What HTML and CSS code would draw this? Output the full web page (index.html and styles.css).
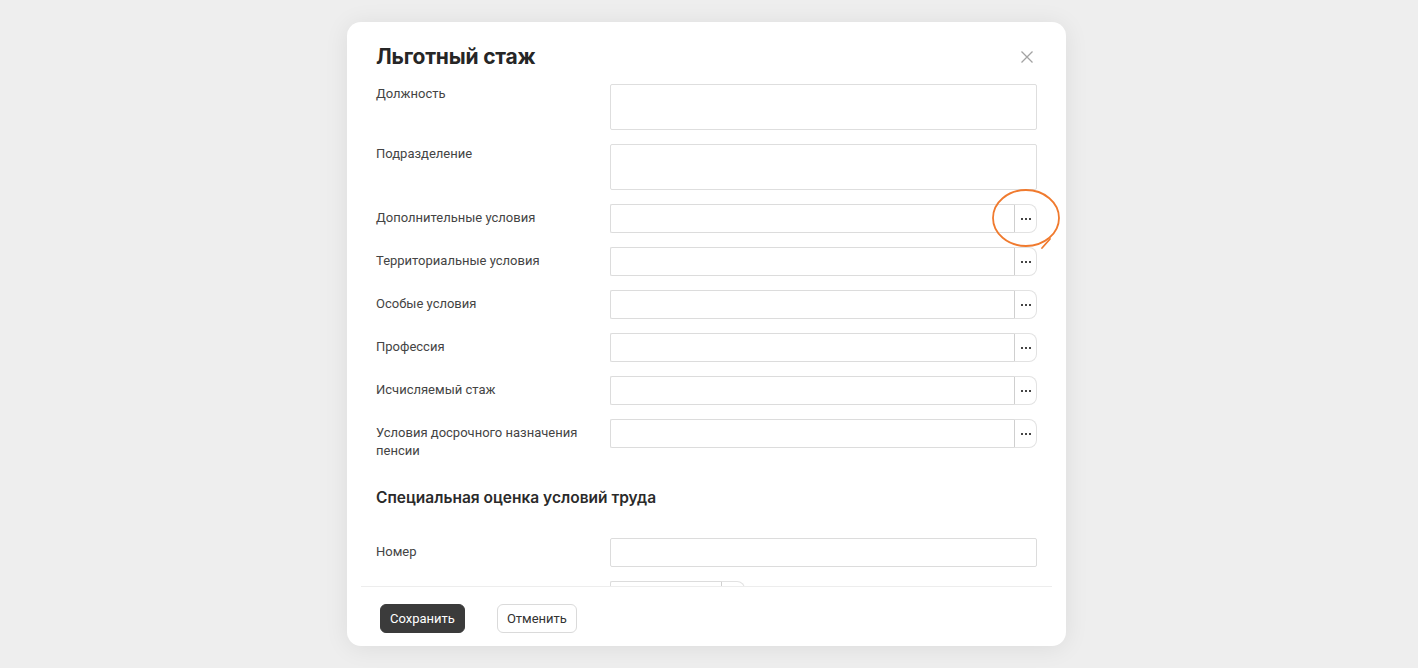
FILE: index.html
```html
<!DOCTYPE html>
<html lang="ru">
<head>
<meta charset="utf-8">
<title>Льготный стаж</title>
<link rel="stylesheet" href="styles.css">
</head>
<body>
<div class="modal">
  <div class="modal-header">
    <h1 class="title">Льготный стаж</h1>
    <button class="close" aria-label="Закрыть">
      <svg width="12" height="12" viewBox="0 0 12 12"><path d="M0.5 0.5 L11.5 11.5 M11.5 0.5 L0.5 11.5" stroke="#a3a3a3" stroke-width="1.3" fill="none"/></svg>
    </button>
  </div>
  <div class="modal-body">
    <div class="form">
      <div class="label label-top">Должность</div>
      <div class="textarea"></div>

      <div class="label label-top">Подразделение</div>
      <div class="textarea"></div>

      <div class="label">Дополнительные условия</div>
      <div class="picker"><div class="picker-input"></div><div class="picker-btn"><svg width="10" height="2" viewBox="0 0 10 2"><rect x="0" y="0" width="2" height="2" fill="#444"/><rect x="4" y="0" width="2" height="2" fill="#444"/><rect x="8" y="0" width="2" height="2" fill="#444"/></svg></div></div>

      <div class="label">Территориальные условия</div>
      <div class="picker"><div class="picker-input"></div><div class="picker-btn"><svg width="10" height="2" viewBox="0 0 10 2"><rect x="0" y="0" width="2" height="2" fill="#444"/><rect x="4" y="0" width="2" height="2" fill="#444"/><rect x="8" y="0" width="2" height="2" fill="#444"/></svg></div></div>

      <div class="label">Особые условия</div>
      <div class="picker"><div class="picker-input"></div><div class="picker-btn"><svg width="10" height="2" viewBox="0 0 10 2"><rect x="0" y="0" width="2" height="2" fill="#444"/><rect x="4" y="0" width="2" height="2" fill="#444"/><rect x="8" y="0" width="2" height="2" fill="#444"/></svg></div></div>

      <div class="label">Профессия</div>
      <div class="picker"><div class="picker-input"></div><div class="picker-btn"><svg width="10" height="2" viewBox="0 0 10 2"><rect x="0" y="0" width="2" height="2" fill="#444"/><rect x="4" y="0" width="2" height="2" fill="#444"/><rect x="8" y="0" width="2" height="2" fill="#444"/></svg></div></div>

      <div class="label">Исчисляемый стаж</div>
      <div class="picker"><div class="picker-input"></div><div class="picker-btn"><svg width="10" height="2" viewBox="0 0 10 2"><rect x="0" y="0" width="2" height="2" fill="#444"/><rect x="4" y="0" width="2" height="2" fill="#444"/><rect x="8" y="0" width="2" height="2" fill="#444"/></svg></div></div>

      <div class="label">Условия досрочного назначения пенсии</div>
      <div class="picker"><div class="picker-input"></div><div class="picker-btn"><svg width="10" height="2" viewBox="0 0 10 2"><rect x="0" y="0" width="2" height="2" fill="#444"/><rect x="4" y="0" width="2" height="2" fill="#444"/><rect x="8" y="0" width="2" height="2" fill="#444"/></svg></div></div>
    </div>

    <h2 class="section">Специальная оценка условий труда</h2>

    <div class="form">
      <div class="label">Номер</div>
      <div class="input"></div>

      <div class="label"></div>
      <div class="date"><div class="date-input"></div><div class="date-btn"></div></div>
    </div>
  </div>
  <div class="modal-footer">
    <button class="btn btn-primary">Сохранить</button>
    <button class="btn btn-secondary">Отменить</button>
  </div>

  <svg class="annotation" width="80" height="70" viewBox="0 0 80 70">
    <ellipse cx="39" cy="31" rx="33" ry="28" fill="none" stroke="#f07a2e" stroke-width="1.8"/>
    <path d="M55 61 L63 52" stroke="#f07a2e" stroke-width="1.8" fill="none" stroke-linecap="round"/>
  </svg>
</div>
</body>
</html>
```

FILE: styles.css
```css
* {
  box-sizing: border-box;
}

html, body {
  margin: 0;
  padding: 0;
}

body {
  background: #eeeeee;
  font-family: Roboto, "Noto Sans", "Liberation Sans", sans-serif;
  color: #333;
  width: 1418px;
  height: 668px;
  overflow: hidden;
  padding-top: 22px;
}

.modal {
  position: relative;
  width: 719px;
  height: 624px;
  margin-left: 347px;
  background: #fff;
  border-radius: 14px;
  box-shadow: 0 2px 24px rgba(0, 0, 0, 0.08);
  display: flex;
  flex-direction: column;
}

.modal-header {
  display: flex;
  align-items: center;
  justify-content: space-between;
  padding: 23px 29px 0 29px;
  height: 47px;
}

.title {
  margin: 0;
  font-family: Inter, Roboto, sans-serif;
  font-size: 21px;
  line-height: 24px;
  font-weight: 700;
  color: #262626;
  letter-spacing: -0.2px;
}

.close {
  border: 0;
  background: none;
  padding: 0;
  width: 12px;
  height: 12px;
  margin-right: 4px;
  display: flex;
}

.modal-body {
  flex: 1;
  overflow: hidden;
  padding: 15px 29px 0 29px;
}

.form {
  display: grid;
  grid-template-columns: 234px 427px;
  row-gap: 14px;
  align-items: start;
}

.label {
  font-size: 13px;
  line-height: 18px;
  color: #444;
  padding-top: 5px;
  padding-right: 20px;
}

.label-top {
  padding-top: 1px;
}

.textarea {
  height: 46px;
  border: 1px solid #dedede;
  border-radius: 2px;
}

.input {
  height: 29px;
  border: 1px solid #dcdcdc;
  border-radius: 2px;
}

.picker {
  display: flex;
  height: 29px;
}

.picker-input {
  flex: 1;
  border: 1px solid #dcdcdc;
  border-right: 0;
  border-radius: 2px 0 0 2px;
}

.picker-btn {
  width: 23px;
  border: 1px solid #e2e2e2;
  border-left: 1px solid #cfcfcf;
  border-radius: 0 8px 8px 0;
  display: flex;
  align-items: center;
  justify-content: center;
}

.section {
  margin: 28px 0 30px 0;
  font-family: Inter, Roboto, sans-serif;
  font-size: 15.5px;
  line-height: 20px;
  font-weight: 600;
  color: #2a2a2a;
}

.date {
  display: flex;
  height: 29px;
}

.date-input {
  width: 112px;
  border: 1px solid #dcdcdc;
  border-right: 1px solid #cfcfcf;
  border-radius: 2px 0 0 2px;
}

.date-btn {
  width: 23px;
  border: 1px solid #e2e2e2;
  border-left: 0;
  border-radius: 0 8px 8px 0;
}

.modal-footer {
  margin: 0 14px;
  border-top: 1px solid #ededed;
  padding: 17px 19px 13px 19px;
  display: flex;
  gap: 32px;
}

.btn {
  height: 29px;
  font-family: inherit;
  font-size: 13px;
  border-radius: 6px;
  padding: 0 9px;
  cursor: pointer;
}

.btn-primary {
  background: #3b3b3b;
  color: #fff;
  border: 1px solid #3b3b3b;
}

.btn-secondary {
  background: #fff;
  color: #333;
  border: 1px solid #dadada;
}

.annotation {
  position: absolute;
  left: 640px;
  top: 165px;
  pointer-events: none;
}
```
